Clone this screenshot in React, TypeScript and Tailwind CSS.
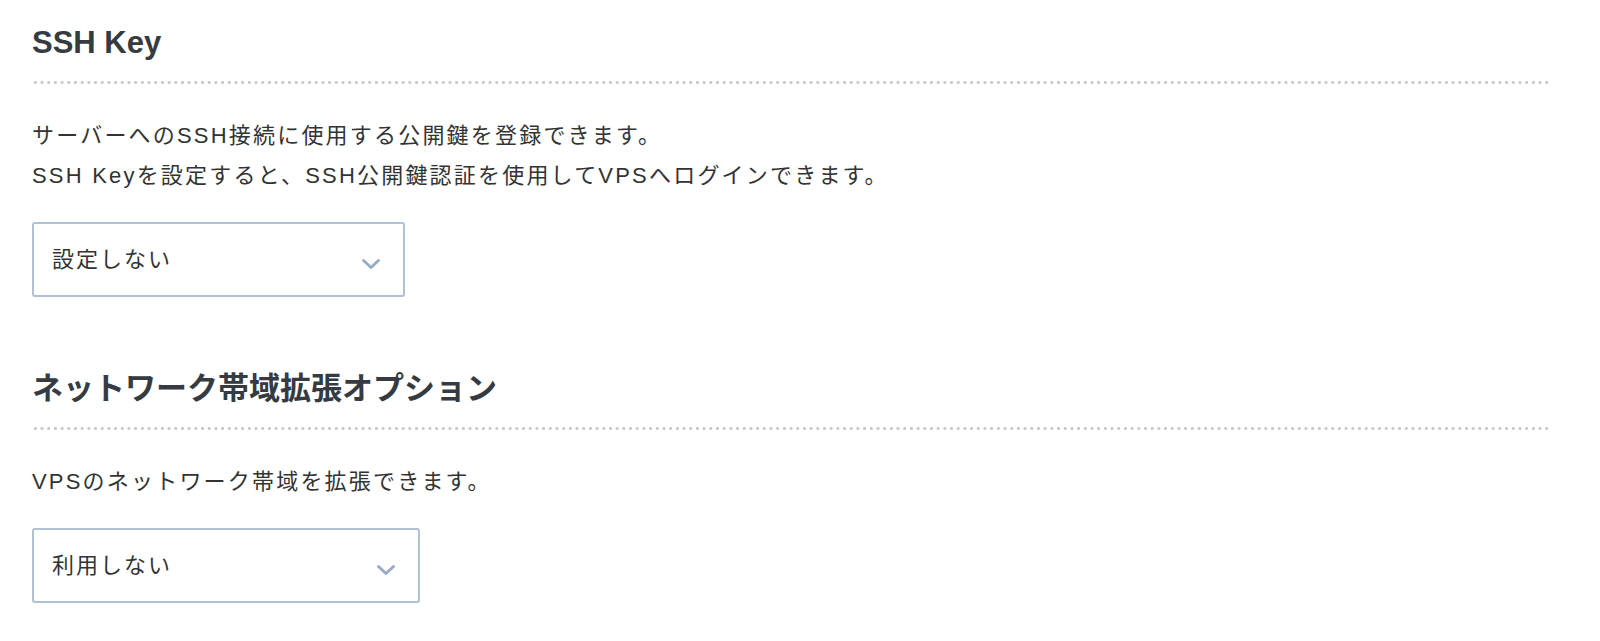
import type { ReactNode } from "react";

const FONT = "font-['Liberation_Sans','Noto_Sans_CJK_JP',sans-serif]";

function Chevron() {
  return (
    <svg
      width="20"
      height="12"
      viewBox="0 0 20 12"
      fill="none"
      aria-hidden
      className="mt-[8px]"
    >
      <path
        d="M2.5 2.5l7.5 7 7.5-7"
        stroke="#97acc6"
        strokeWidth="3"
        strokeLinecap="round"
        strokeLinejoin="round"
      />
    </svg>
  );
}

function SelectBox({ value, width }: { value: string; width: string }) {
  return (
    <div
      className={`mt-[26px] flex h-[75px] items-center justify-between rounded-[3px] border-2 border-[#b1c0d4] bg-white pl-[18px] pr-[22px] ${width}`}
    >
      <span className="text-[22px] tracking-[0.09em] text-[#333]">{value}</span>
      <Chevron />
    </div>
  );
}

function Section({
  title,
  children,
  className = "",
}: {
  title: string;
  children: ReactNode;
  className?: string;
}) {
  return (
    <section className={className}>
      <h2 className="text-[31px] font-bold leading-[44px] text-[#353b41]">
        {title}
      </h2>
      <div className="mt-[16px] h-[3px] bg-[radial-gradient(circle,#c6c6c6_1.2px,transparent_1.7px)] bg-[length:6.7px_3px] bg-repeat-x" />
      {children}
    </section>
  );
}

export default function App() {
  return (
    <main className={`min-h-screen bg-white pl-8 pr-[50px] pt-[21px] ${FONT}`}>
      <Section title="SSH Key">
        <div className="mt-[32px] text-[22px] leading-[40px] tracking-[0.1em] text-[#333]">
          <p>サーバーへのSSH接続に使用する公開鍵を登録できます。</p>
          <p>SSH Keyを設定すると、SSH公開鍵認証を使用してVPSへログインできます。</p>
        </div>
        <SelectBox value="設定しない" width="w-[373px]" />
      </Section>

      <Section title="ネットワーク帯域拡張オプション" className="mt-[70px]">
        <p className="mt-[32px] text-[22px] leading-[40px] tracking-[0.1em] text-[#333]">
          VPSのネットワーク帯域を拡張できます。
        </p>
        <SelectBox value="利用しない" width="w-[388px]" />
      </Section>
    </main>
  );
}
